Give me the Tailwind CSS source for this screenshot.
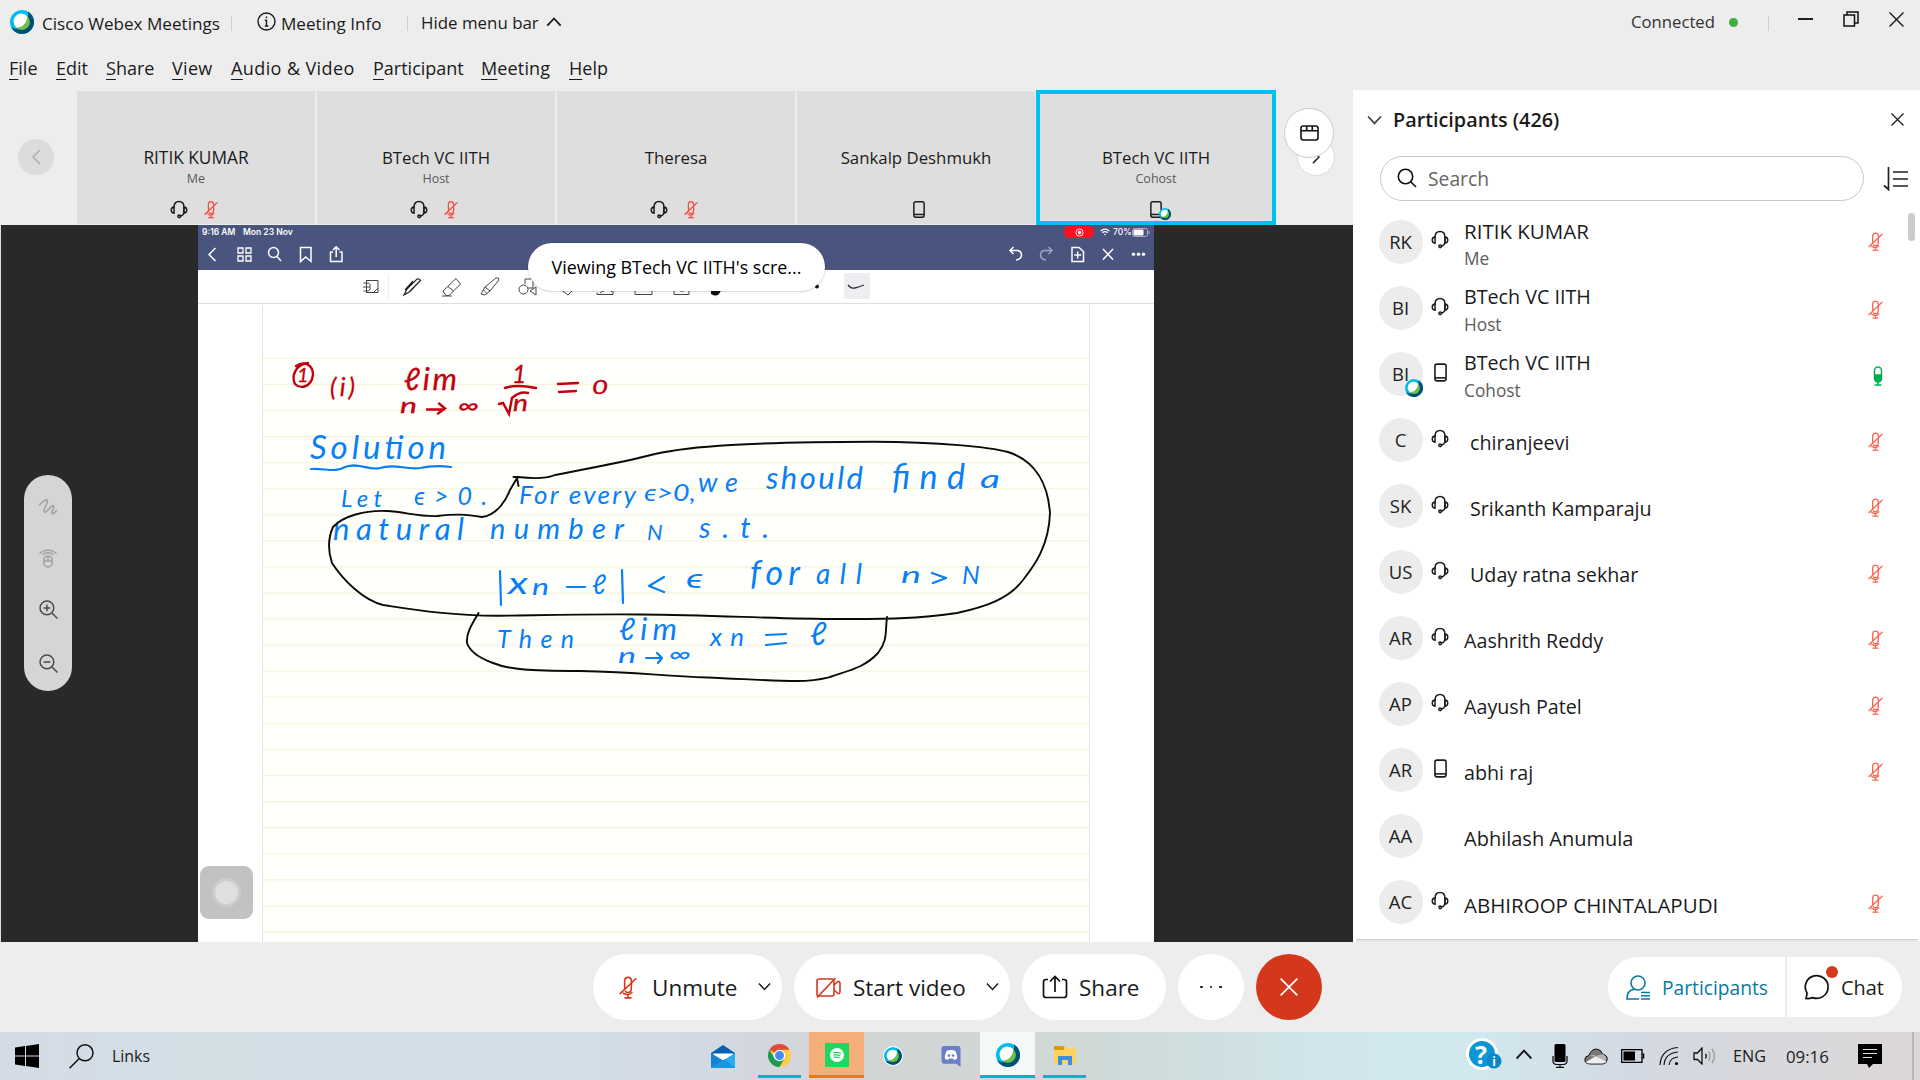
<!DOCTYPE html>
<html lang="en">
<head>
<meta charset="utf-8">
<title>Cisco Webex Meetings</title>
<script src="https://cdn.jsdelivr.net/npm/@tailwindcss/browser@4"></script>
</head>
<body class="w-[1920px] h-[1080px] overflow-hidden bg-[#ededed] text-[#1b1b1b] font-['Open_Sans',sans-serif] flex flex-col">

<svg class="hidden">
  <symbol id="webex" viewBox="0 0 24 24">
    <circle cx="12" cy="12" r="12" fill="#00bceb"/>
    <path d="M18 1.6A12 12 0 1 1 1.2 17.2Q5 20 12 19Q19 15 18 1.6Z" fill="#005073"/>
    <circle cx="12" cy="12" r="7.9" fill="#6cc04a"/>
    <path d="M17.3 6.2A7.9 7.9 0 1 0 6.3 17.5C12 18 17 13 17.3 6.2Z" fill="#fff"/>
  </symbol>
  <symbol id="headset" viewBox="0 0 20 20" fill="none" stroke="currentColor" stroke-width="1.6" stroke-linecap="round">
    <path d="M4.5 7.5C4.5 3.5 6.8 1.2 10 1.2S15.500 3.500 15.500 7.500V13.500Q15 16.500 11.500 17.500"/>
    <path d="M4.500 7.200C.3 7.500.3 13.800 4.500 14.200ZM15.500 7.200C19.700 7.500 19.700 13.800 15.500 14.200Z"/>
    <circle cx="10.200" cy="17.600" r="1.500"/>
  </symbol>
  <symbol id="micoff" viewBox="0 0 16 20" fill="none" stroke="currentColor" stroke-width="1.400" stroke-linecap="round">
    <path d="M5 11V4Q5.200 1 8 1T11 4V10.500Q11 14.500 8 14.500Q6.500 14.500 5.800 13.500"/>
    <path d="M1 15.500L15 2.200M3.800 15Q8 18 11.500 14.500M8 16.500V19M5.300 19.200H10.700"/>
  </symbol>
  <symbol id="phone" viewBox="0 0 14 20" fill="none" stroke="currentColor" stroke-width="1.700">
    <rect x="1" y="1" width="12" height="18" rx="2.200"/><path d="M1 15.800H13"/>
  </symbol>
  <symbol id="x" viewBox="0 0 14 14" fill="none" stroke="currentColor" stroke-width="1.300"><path d="M.5.5L13.500 13.500M13.500.5L.5 13.500"/></symbol>
  <symbol id="down" viewBox="0 0 14 9" fill="none" stroke="currentColor" stroke-width="1.600"><path d="M1 1.200L7 7.700L13 1.200"/></symbol>
</svg>

<!-- title bar -->
<header class="h-[46px] shrink-0 flex items-center text-[17.1px] leading-none">
  <svg class="size-6 ml-[10px] -mt-[2px]"><use href="#webex"/></svg>
  <span class="ml-2 w-[189px] whitespace-nowrap pt-px">Cisco Webex Meetings</span>
  <span class="w-px h-[15px] bg-[#cfcfcf]"></span>
  <svg class="size-[19px] ml-[25px] -mt-[3px]" viewBox="0 0 19 19" fill="none" stroke="currentColor" stroke-width="1.400"><circle cx="9.500" cy="9.500" r="8.500"/><path d="M9.500 8V14M7.800 8.300H9.500M7.800 14H11.300M9.500 4.500V6.200"/></svg>
  <span class="ml-[5px] w-[126px] whitespace-nowrap pt-px">Meeting Info</span>
  <span class="w-px h-[15px] bg-[#cfcfcf]"></span>
  <span class="ml-[13px] whitespace-nowrap text-[16.9px] pt-px">Hide menu bar</span>
  <svg class="w-4 h-[10px] ml-[7px] -mt-[2px] rotate-180"><use href="#down"/></svg>
  <span class="ml-auto w-[85px] text-[16.700px] text-[#333] whitespace-nowrap -mt-[2px]">Connected</span>
  <span class="size-[9px] rounded-full bg-[#3fae3f] ml-[13px] -mt-px"></span>
  <span class="w-px h-[15px] bg-[#cfcfcf] ml-[30px]"></span>
  <span class="w-[15px] h-[2px] bg-[#222] ml-[29px] -mt-2"></span>
  <svg class="size-[16px] ml-[30px] -mt-2" viewBox="0 0 16 16" fill="none" stroke="#111" stroke-width="1.500"><rect x="1" y="4" width="10.500" height="11"/><path d="M4 4V1H15V12H11.500"/></svg>
  <svg class="size-[15px] ml-[30px] mr-[16px] -mt-2"><use href="#x"/></svg>
</header>

<!-- menu bar -->
<nav class="h-[44px] shrink-0 pl-[9px] pt-[9px] flex text-[18px] leading-[26px] whitespace-nowrap">
  <span class="w-[47px]"><u class="underline-offset-4 decoration-1">F</u>ile</span>
  <span class="w-[50px]"><u class="underline-offset-4 decoration-1">E</u>dit</span>
  <span class="w-[66px]"><u class="underline-offset-4 decoration-1">S</u>hare</span>
  <span class="w-[59px] tracking-[0.3px]"><u class="underline-offset-4 decoration-1">V</u>iew</span>
  <span class="w-[142px] tracking-[0.4px]"><u class="underline-offset-4 decoration-1">A</u>udio &amp; Video</span>
  <span class="w-[108px]"><u class="underline-offset-4 decoration-1">P</u>articipant</span>
  <span class="w-[88px] tracking-[0.15px]"><u class="underline-offset-4 decoration-1">M</u>eeting</span>
  <span><u class="underline-offset-4 decoration-1">H</u>elp</span>
</nav>

<main class="h-[852px] shrink-0 flex">
  <section class="w-[1353px] flex flex-col">
    <!-- video strip -->
    <div class="h-[135px] flex shrink-0 relative">
      <div class="w-[77px] pl-[18px] pt-[49px]"><span class="size-9 rounded-full bg-[#dcdcdc] flex items-center justify-center"><svg class="w-[9px] h-4" viewBox="0 0 9 16" fill="none" stroke="#aaa" stroke-width="1.400"><path d="M8 1L1 8L8 15"/></svg></span></div>
      <div id="tiles" class="flex pt-px gap-[2px] h-[134px]"></div>
      <span class="absolute left-[1297px] top-[48px] size-[38px] rounded-full bg-white border border-[#ddd] flex items-center justify-center"><svg class="w-2 h-[14px]" viewBox="0 0 9 16" fill="none" stroke="#222" stroke-width="1.700"><path d="M1 1L8 8L1 15"/></svg></span>
      <span class="absolute left-[1284px] top-[18px] size-[50px] rounded-full bg-white border border-[#ccc] flex items-center justify-center"><svg class="w-[19px] h-4" viewBox="0 0 19 16" fill="none" stroke="#111" stroke-width="1.600"><rect x="1" y="1" width="17" height="14" rx="2.200"/><path d="M1 5.800H18M6.700 1V5.500M12.300 1V5.500"/></svg></span>
    </div>

    <!-- shared screen -->
    <div class="h-[717px] bg-[#292929] border-l border-[#dcdcdc] relative flex">
      <div class="w-[197px] shrink-0 pt-[250px] pl-[23px]">
        <div class="w-12 h-[216px] rounded-full bg-[#d5d5d5] relative flex flex-col items-center pt-[22px] text-[#4a4a4a]">
          <svg class="w-5 h-5" viewBox="0 0 20 20" fill="none" stroke="#a3a3a3" stroke-width="1.600" stroke-linecap="round"><path d="M1.500 8Q8 1 9.500 3.500C10.500 6 4 13 6.500 15C9 16.500 13 7 15.500 9C17 11 12.500 15 14 16.500Q15.500 17.500 18.500 13.500"/></svg>
          <svg class="w-5 h-5 mt-[31px]" viewBox="0 0 20 20" fill="none" stroke="#a3a3a3" stroke-width="1.500"><path d="M1.500 5.500Q10 -1.500 18.500 5.500M4.500 7Q10 2.500 15.500 7"/><rect x="5.800" y="8" width="8.400" height="11" rx="4"/><path d="M5.800 13H14.200M10 8V13"/></svg>
          <svg class="w-[19px] h-[19px] mt-[32px]" viewBox="0 0 18 18" fill="none" stroke="currentColor" stroke-width="1.400"><circle cx="7.500" cy="7.500" r="6.500"/><path d="M12.300 12.300L17.500 17.500M4.300 7.500H10.700M7.500 4.300V10.700"/></svg>
          <svg class="w-[19px] h-[19px] mt-[35px]" viewBox="0 0 18 18" fill="none" stroke="currentColor" stroke-width="1.400"><circle cx="7.500" cy="7.500" r="6.500"/><path d="M12.300 12.300L17.500 17.500M4.300 7.500H10.700"/></svg>
        </div>
      </div>

      <div class="w-[956px] bg-white flex flex-col relative">
        <!-- tablet status and navigation -->
        <div class="h-[45px] bg-[#49557f] text-white shrink-0">
          <div class="h-[13px] flex items-center leading-none font-semibold font-['Inter',sans-serif] pl-1 pt-px">
            <span class="w-[41px] whitespace-nowrap text-[8.500px]">9:16 AM</span><span class="whitespace-nowrap text-[8.500px]">Mon 23 Nov</span>
            <span class="ml-auto w-[30px] h-3 rounded-[5px] bg-[#fb1220] flex items-center justify-center"><svg class="size-[9px]" viewBox="0 0 10 10" fill="none" stroke="#fff"><circle cx="5" cy="5" r="4"/><circle cx="5" cy="5" r="1.500" fill="#fff"/></svg></span>
            <svg class="w-[10px] h-2 ml-[6px]" viewBox="0 0 12 9" fill="none" stroke="#fff" stroke-width="1.500"><path d="M.8 3.500Q6 -1.500 11.200 3.500M2.800 5.500Q6 2.500 9.200 5.500"/><circle cx="6" cy="7.500" r="1" fill="#fff" stroke="none"/></svg>
            <span class="ml-[3px] w-[18px] text-[8.500px] font-medium">70%</span>
            <svg class="w-[18px] h-[9px] ml-px mr-1" viewBox="0 0 18 9"><rect x=".5" y=".5" width="15" height="8" rx="2" fill="none" stroke="#a7adc4"/><rect x="1.500" y="1.500" width="10" height="6" rx="1" fill="#fff"/><path d="M17 3V6" stroke="#a7adc4"/></svg>
          </div>
          <svg class="block w-[956px] h-8" viewBox="198 238 956 32" fill="none" stroke="#fff" stroke-width="1.500">
            <path d="M215.500 248L209 254.500L215.500 261"/>
            <path d="M238 248h5v5h-5zM246 248h5v5h-5zM238 256h5v5h-5zM246 256h5v5h-5z" stroke-width="1.300"/>
            <circle cx="273.500" cy="252.500" r="5"/><path d="M277 256.500L281 261"/>
            <path d="M300.500 247.500H311V261.500L305.700 257L300.500 261.500Z"/>
            <path d="M333 252H330.500V261.500H342V252H339.500M336.200 257V247M333 250L336.200 246.800L339.500 250"/>
            <path d="M1013.500 247L1010 250.500L1013.500 254M1010.500 250.500H1017.500Q1021.500 251 1021.500 255T1016 260"/>
            <path d="M1048.500 247L1052 250.500L1048.500 254M1051.500 250.500H1044.500Q1040.500 251 1040.500 255T1046 260" stroke="#a0a6bf"/>
            <path d="M1072 247.500H1079L1083.500 251.500V261.500H1072ZM1077.700 251.500V258.500M1074.300 255H1081.200"/>
            <path d="M1103 249L1113 259.500M1113 249L1103 259.500"/>
            <g fill="#fff" stroke="none"><circle cx="1133.500" cy="254.300" r="1.700"/><circle cx="1138.500" cy="254.300" r="1.700"/><circle cx="1143.500" cy="254.300" r="1.700"/></g>
          </svg>
        </div>
        <!-- drawing tools -->
        <div class="h-[34px] border-b border-[#dedede] shrink-0">
          <svg class="block w-[956px] h-[33px]" viewBox="198 270 956 33" fill="none" stroke="#444" stroke-width="1">
            <path d="M366 280.500H378V292.500H366M363.500 283H367Q371 283 370 287Q371 291 367 291H363.500M366.500 280.500V292.500M363 287H370M374 292L378 288"/>
            <path d="M388.500 274V298M716 274V298" stroke="#eee"/>
            <path d="M404 295L407 289L417 279Q419.500 278.500 420.500 280.500L410 291.500L404 295ZM413 281L405 290M410 291L420 281" stroke="#222" stroke-width="1.200"/>
            <path d="M443 291L456 278.500L460.500 284L449 295.500H446ZM448 286.500L453.500 291M442 296H452"/>
            <path d="M485 287L496 278Q499 277 499 280L490 291ZM485 287L481 294L485 295L490 291M483.500 290L487 293.500"/>
            <circle cx="523.500" cy="289.500" r="4.500"/><path d="M525 284V279H533V288H528M530 291L536 287V295Z"/>
            <path d="M560 289L568 295L573 290M562 287L568 291M597 292.500V294.500H613V291M600 293L608 288L612 292M635 291V294.500H652V291M640 290H646M674 291V294.500H689V291M680 291H684"/>
            <path d="M711 291L717 290L723 287L719 294Q716 297 711 294Z" fill="#111" stroke="none"/>
            <circle cx="817" cy="286.500" r="2" fill="#111" stroke="none"/>
            <rect x="844" y="273" width="26" height="26" rx="2" fill="#efedf1" stroke="none"/>
            <path d="M848 285Q851 289 855 288T864 285" stroke="#333" stroke-width="1.300"/>
          </svg>
        </div>
        <!-- notebook page -->
        <svg class="block w-[956px] h-[638px]" viewBox="198 304 956 638">
          <defs><pattern id="rule" x="198" y="357.800" width="900" height="26.070" patternUnits="userSpaceOnUse"><rect width="900" height="1.200" fill="#f7f3dd"/></pattern></defs>
          <rect x="262" y="358" width="827" height="584" fill="#fffffb"/>
          <rect x="263" y="357" width="826" height="585" fill="url(#rule)"/>
          <path d="M262.500 306V942M1089.500 304V942" stroke="#e6e4e0"/>
          <g fill="none" stroke="#c4000d" stroke-width="2.400" stroke-linecap="round">
            <path d="M296 366C304 361 313 364 313 375C311 388 300 389 295 384C291 376 296 364 308 363"/>
            <path d="M427 409.500H444M439 403.500L445 408.500L438 413.500M505 388Q516 384 536 388M499 404L503 403L509 414L512 398Q520 391 528 393M558 384L578 383M559 392L576 391"/>
          </g>
          <g class="font-['Lato',sans-serif] italic" fill="#c4000d" stroke="#c4000d" stroke-width=".3">
            <text x="297" y="382" font-size="20">1</text>
            <text x="330" y="396" font-size="25" textLength="25">(i)</text>
            <text x="404" y="390" font-size="31" textLength="53" lengthAdjust="spacing">ℓim</text>
            <text x="400" y="413" font-size="22" textLength="17" lengthAdjust="spacingAndGlyphs">n</text>
            <text x="458" y="413" font-size="21" textLength="21" lengthAdjust="spacingAndGlyphs">∞</text>
            <text x="512" y="383" font-size="25">1</text>
            <text x="513" y="411" font-size="23" textLength="15" lengthAdjust="spacingAndGlyphs">n</text>
            <text x="592" y="394" font-size="19" textLength="16" lengthAdjust="spacingAndGlyphs">0</text>
          </g>
          <g fill="none" stroke="#087ef7" stroke-width="2.200" stroke-linecap="round" stroke-linejoin="round">
            <path d="M311 469C325 468 335 473 345 467C360 462 368 471 380 468C395 463 405 470 420 468Q435 465 451 467"/>
            <path d="M500 571L501 605M622 570L623 603M567 587H585M664 577L649 586L664 592M932 573L946 578L933 583M646 658H662M657 653L662 658L658 663M766 635L786 634M766 645L786 643"/>
          </g>
          <g class="font-['Lato',sans-serif] italic" fill="#087ef7">
            <text x="310" y="459" font-size="33" textLength="136" lengthAdjust="spacing">Solution</text>
            <text x="341" y="507" font-size="24" textLength="41" lengthAdjust="spacing">Let</text>
            <text x="414" y="505" font-size="25" textLength="73" lengthAdjust="spacing">ϵ&gt;0.</text>
            <text x="519" y="504" font-size="26" textLength="117" lengthAdjust="spacing">For every</text>
            <text x="644" y="501" font-size="23" textLength="52" lengthAdjust="spacingAndGlyphs">ϵ&gt;0,</text>
            <text x="698" y="492" font-size="27" textLength="40" lengthAdjust="spacing">we</text>
            <text x="766" y="489" font-size="31" textLength="97" lengthAdjust="spacing">should</text>
            <text x="892" y="489" font-size="34" textLength="73" lengthAdjust="spacing">find</text>
            <text x="980" y="488" font-size="26" textLength="20" lengthAdjust="spacingAndGlyphs">a</text>
            <text x="333" y="540" font-size="31" textLength="131" lengthAdjust="spacing">natural</text>
            <text x="490" y="539" font-size="29" textLength="134" lengthAdjust="spacing">number</text>
            <text x="647" y="540" font-size="22">N</text>
            <text x="699" y="538" font-size="29" textLength="70" lengthAdjust="spacing">s.t.</text>
            <text x="508" y="594" font-size="31" textLength="20" lengthAdjust="spacingAndGlyphs">x</text>
            <text x="532" y="595" font-size="23" textLength="17" lengthAdjust="spacingAndGlyphs">n</text>
            <text x="592" y="594" font-size="27">ℓ</text>
            <text x="686" y="588" font-size="27" textLength="17" lengthAdjust="spacingAndGlyphs">ϵ</text>
            <text x="750" y="585" font-size="34" textLength="50" lengthAdjust="spacing">for</text>
            <text x="816" y="584" font-size="28" textLength="46" lengthAdjust="spacing">all</text>
            <text x="901" y="583" font-size="24" textLength="20" lengthAdjust="spacingAndGlyphs">n</text>
            <text x="962" y="584" font-size="25">N</text>
            <text x="497" y="648" font-size="25" textLength="77" lengthAdjust="spacing">Then</text>
            <text x="619" y="640" font-size="31" textLength="58" lengthAdjust="spacing">ℓim</text>
            <text x="618" y="663" font-size="22" textLength="18" lengthAdjust="spacingAndGlyphs">n</text>
            <text x="669" y="662" font-size="22" textLength="22" lengthAdjust="spacingAndGlyphs">∞</text>
            <text x="710" y="646" font-size="26" textLength="34" lengthAdjust="spacing">xn</text>
            <text x="810" y="645" font-size="32">ℓ</text>
          </g>
          <g fill="none" stroke="#0a0a0a" stroke-width="1.900" stroke-linecap="round" stroke-linejoin="round">
            <path d="M513.500 477L518 477C535 479 548 478 555 475C585 469 625 462 655 454C690 446 750 442 873 441.700C940 442 990 447 1008 452C1036 461 1048 485 1050 513C1049 545 1035 565 1023 580C1009 599 985 607 957 613C920 619 880 619 840 619C770 619 720 615 640 614.500C580 614 530 615.500 500 615.700C450 616 410 609 383 605C363 600 343 580 332 563C327 548 329 536 333 527C343 516 365 510 387 511C405 512 420 517 437 516C455 514 465 514 482 517C498 515 507 498 510 490L517 478L518.500 486"/>
            <path d="M478.500 613C472 624 466 633 467 643C470 652 482 659 493 663C510 670 530 670.500 580 671C640 672 660 676 707 677.500C745 679 770 681 797 681C815 681 822 679 830 677C850 670 864 668 878 653C888 640 885 632 887 617"/>
          </g>
        </svg>
        <!-- assistive button -->
        <span class="absolute left-[1.500px] top-[641px] size-[53px] rounded-[9px] bg-[#c2c2c2] flex items-center justify-center"><span class="size-[23px] rounded-full bg-[#dfdfdf] ring-3 ring-[#cccccc]"></span></span>
      </div>

      <div class="absolute left-[527px] top-[18px] w-[297px] h-12 rounded-full bg-white shadow-sm ring-1 ring-black/5 flex items-center justify-center text-[17.900px] text-black whitespace-nowrap">Viewing BTech VC IITH's scre...</div>
    </div>
  </section>

  <!-- participants panel -->
  <aside class="w-[567px] h-[852px] bg-white relative flex flex-col overflow-hidden">
    <div class="h-[66px] flex items-center shrink-0 pl-[14px] pr-4 pt-[2px] -mt-[4px]">
      <svg class="w-[15px] h-[10px] text-[#444]"><use href="#down"/></svg>
      <span class="ml-[11px] font-semibold text-[19.800px] leading-none whitespace-nowrap">Participants (426)</span>
      <svg class="size-[13px] ml-auto -mt-[2px]"><use href="#x"/></svg>
    </div>
    <div class="flex items-center shrink-0 mt-[4px] pl-[27px]">
      <div class="w-[484px] h-[45px] rounded-full border border-[#c9c9c9] flex items-center pl-[16px] text-[19.300px] text-[#666]">
        <svg class="size-5 mr-[11px] -mt-[2px]" viewBox="0 0 20 20" fill="none" stroke="#111" stroke-width="1.600"><circle cx="8.500" cy="8.500" r="7.200"/><path d="M13.700 13.700L19 19"/></svg><span class="pt-[2px]">Search</span>
      </div>
      <svg class="w-[25px] h-6 ml-[19px]" viewBox="0 0 25 24" fill="none" stroke="#222" stroke-width="1.700"><path d="M5.500 0V22.500L1 18.500M10 5H25M10 12H25M10 19H25"/></svg>
    </div>
    <div id="people" class="pt-[8px]"></div>
    <span class="absolute right-[5px] top-[123px] w-[7px] h-7 rounded-sm bg-[#cbcbcb]"></span>
    <span class="absolute left-[3px] right-[2px] bottom-0 h-[3px] bg-[#e6e6e6] border-t border-[#cfcfcf]"></span>
  </aside>
</main>

<!-- call controls -->
<div class="h-[90px] shrink-0 flex items-center pl-[593px] pr-[18px] text-[22.500px] leading-none whitespace-nowrap">
  <div class="w-[189px] h-[66px] rounded-full bg-white flex items-center pl-[26px]">
    <svg class="w-[18px] h-[23px] text-[#d4371c]"><use href="#micoff"/></svg><span class="ml-[15px] w-[86px] pt-[2px]">Unmute</span><svg class="w-[13px] h-[9px] ml-[20px] -mt-[2px]"><use href="#down"/></svg>
  </div>
  <div class="w-[216px] h-[66px] ml-3 rounded-full bg-white flex items-center pl-[22px]">
    <svg class="w-[25px] h-[21px]" viewBox="0 0 25 21" fill="none" stroke="#d4371c" stroke-width="1.600"><rect x="1" y="2" width="17" height="17" rx="2"/><path d="M18 8L22 4.500Q24 4 24 6.500V14.500Q24 17 22 16.500L18 13M1 20.500L19.500 1"/></svg>
    <span class="ml-3 w-[113px] pt-[2px]">Start video</span><svg class="w-[13px] h-[9px] ml-[20px] -mt-[2px]"><use href="#down"/></svg>
  </div>
  <div class="w-[144px] h-[66px] ml-3 rounded-full bg-white flex items-center pl-[20px]">
    <svg class="w-[26px] h-[24px]" viewBox="0 0 26 24" fill="none" stroke="#111" stroke-width="1.700"><path d="M6 4.500H4Q1.500 4.500 1.500 7V20Q1.500 22.500 4 22.500H22Q24.500 22.500 24.500 20V7Q24.500 4.500 22 4.500H20M13 17V2M8 6.500L13 1.500L18 6.500"/></svg>
    <span class="ml-[11px] pt-[2px]">Share</span>
  </div>
  <div class="size-[66px] ml-3 rounded-full bg-white flex items-center justify-center gap-[7px]"><i class="size-[2.500px] rounded-full bg-[#111]"></i><i class="size-[2.500px] rounded-full bg-[#111]"></i><i class="size-[2.500px] rounded-full bg-[#111]"></i></div>
  <div class="size-[66px] ml-3 rounded-full bg-[#d4371c] text-white flex items-center justify-center"><svg class="size-[18px]"><use href="#x"/></svg></div>

  <div class="ml-auto h-[60px] w-[294px] rounded-full bg-white flex items-center text-[19.200px]">
    <div class="w-[177px] flex items-center pl-[18px] text-[#0a7aa0]">
      <svg class="w-[24px] h-[25px]" viewBox="0 0 24 25" fill="none" stroke="currentColor" stroke-width="1.600"><circle cx="12" cy="8" r="7"/><path d="M8 14.500Q1 15 1 24H13M15 17.500H24M15 20.700H24M15 24H24"/></svg>
      <span class="ml-3 pt-[2px]">Participants</span>
    </div>
    <div class="w-[2px] h-[60px] bg-[#ededed]"></div>
    <div class="flex items-center pl-[17px] relative">
      <svg class="w-[26px] h-[26px]" viewBox="0 0 26 26" fill="none" stroke="#111" stroke-width="1.700"><path d="M2 24.500Q3 21 3 19A11.400 11.400 0 1 1 8.500 23.600Q5 25 2 24.500Z"/></svg>
      <i class="absolute left-[39px] -top-[8px] size-3 rounded-full bg-[#d4371c]"></i>
      <span class="ml-[11px] pt-[2px] text-[19.900px]">Chat</span>
    </div>
  </div>
</div>

<!-- taskbar -->
<footer class="h-12 shrink-0 relative flex items-center bg-[linear-gradient(90deg,#d5dbe6_0%,#d2dfe5_10%,#d3dee6_30%,#d3d8e1_38%,#d2d5d4_46%,#cfd9d6_56%,#cfdedf_62%,#d0e6ec_69%,#d1e9ef_76%,#d3d9e3_85%,#d8d8dc_92%,#dcd7d8_100%)]">
  <svg class="size-6 ml-[15px]" viewBox="0 0 24 24"><path d="M0 3.400L10 2V11.500H0ZM11 1.900L24 0V11.500H11ZM0 12.500H10V22L0 20.600ZM11 12.500H24V24L11 22.100Z"/></svg>
  <svg class="size-[25px] ml-[30px]" viewBox="0 0 25 25" fill="none" stroke="#111" stroke-width="1.500"><circle cx="16" cy="8.800" r="8"/><path d="M10.300 14.500L.5 24.300"/></svg>
  <span class="ml-[18px] w-[584px] shrink-0 pt-px text-[15.900px]">Links</span>
  <div class="flex h-12">
    <div class="w-[57px] flex items-center justify-center pr-[3px]"><svg class="w-6 h-[23px]" viewBox="0 0 24 23"><path d="M0 8L12 0L24 8V12H0Z" fill="#0b5fb0"/><path d="M2 8.500H22V14L12 19L3 12Z" fill="#fff"/><path d="M0 8L13 16L0 23Z" fill="#1583d4"/><path d="M24 8V23H0Z" fill="#29aef0"/><path d="M24 23H0L14 14Z" fill="#1c94e0"/></svg></div>
    <div class="w-[43px] ml-[5px] h-[46px] border-b-[3px] border-[#00b7c8] flex items-center justify-center"><svg class="size-[23px] mt-[3px]" viewBox="0 0 24 24"><circle cx="12" cy="12" r="12" fill="#fc4"/><path d="M12 12L1.600 6A12 12 0 0 1 22.400 6H12Z" fill="#dd4b3e"/><path d="M1.600 6A12 12 0 0 0 12 24L17.200 15L6.800 15Z" fill="#1a9c57"/><circle cx="12" cy="12" r="6" fill="#fff"/><circle cx="12" cy="12" r="4.700" fill="#4a8af4"/></svg></div>
    <div class="w-[55px] ml-2 h-[46px] bg-[#f7af7a] border-b-[3px] border-[#ff7400] flex items-center justify-center"><span class="size-6 mt-[3px] bg-[#1ed760] flex items-center justify-center"><svg class="size-[14px]" viewBox="0 0 14 14"><circle cx="7" cy="7" r="7" fill="#fff"/><path d="M3 4.800Q7 3.600 11 5.500M3.300 7.200Q7 6.200 10.300 7.900M3.700 9.400Q7 8.600 9.600 10" fill="none" stroke="#1ed760" stroke-width="1.200"/></svg></span></div>
    <div class="w-[57px] flex items-center justify-center"><svg class="size-[18px] rounded-full ring-1 ring-white"><use href="#webex"/></svg></div>
    <div class="w-[59px] flex items-center justify-center"><svg class="w-5 h-[21px]" viewBox="0 0 20 22"><path d="M2.500 0H17.500Q20 0 20 2.500V22L15.500 18.500H2.500Q0 18.500 0 16V2.500Q0 0 2.500 0Z" fill="#6b7fc7"/><path d="M5.500 5Q10 3.500 14.500 5Q16.500 9 16.500 13Q14 15 13 14.300L12 13H8L7 14.300Q5 15 3.500 13Q3.500 9 5.500 5Z" fill="#fff"/><circle cx="7.800" cy="10" r="1.400" fill="#6b7fc7"/><circle cx="12.200" cy="10" r="1.400" fill="#6b7fc7"/></svg></div>
    <div class="w-[55px] h-[46px] bg-[#f5f8f8] border-b-[3px] border-[#00b7c8] flex items-center justify-center"><svg class="size-6 mt-[3px]"><use href="#webex"/></svg></div>
    <div class="w-[43px] ml-2 h-[46px] border-b-[3px] border-[#00b7c8] flex items-center justify-center"><svg class="w-[22px] h-[19px] mt-[3px]" viewBox="0 0 22 19"><path d="M0 0H9L11 2H21V6H0Z" fill="#d99a08"/><path d="M0 4H9L11 2H22V18H0Z" fill="#fdd25e"/><path d="M4 19V10H18V19H14V14H8V19Z" fill="#3a8fdd"/></svg></div>
  </div>
  <div class="ml-auto flex items-center">
    <svg class="size-9" viewBox="0 0 36 36"><circle cx="16" cy="16" r="16" fill="#fff"/><circle cx="16" cy="16" r="13" fill="#0a97d9"/><circle cx="28" cy="23" r="7.500" fill="#0a87cc"/></svg>
    <span class="-ml-[27px] -mt-[4px] w-3 text-center text-[25px] leading-none font-bold text-white">?</span><span class="ml-[3px] mt-[11px] w-2 text-center text-[12px] leading-none font-bold text-white">i</span>
    <svg class="w-[18px] h-[11px] ml-[17px] mr-px rotate-180 -mt-1"><use href="#down"/></svg>
    <svg class="w-4 h-6 ml-[18px]" viewBox="0 0 16 24"><rect x="2.500" y="0" width="11" height="18" rx="1.500"/><path d="M1 12V17Q1 20.500 5 20.500H11Q15 20.500 15 17V12M8 20.500V23M4 23.300H12" fill="none" stroke="#000" stroke-width="1.200"/></svg>
    <svg class="w-6 h-[17px] ml-4" viewBox="0 0 24 17"><path d="M6 16Q.7 15.500.8 11.500Q1 8 5 7.500Q7 1 12.500 1Q17.500 1.500 18.500 6Q23 7 23.300 11Q23 15.500 19 16Z" fill="#777" stroke="#111"/><path d="M2 14L12 8L22.500 13.500Q21 15.500 18 15.500H6Q3 15.500 2 14Z" fill="#eee"/><path d="M5 8Q10 6 12 8L19 6Q22 8 22.500 12L21 13L12 8.500Z" fill="#b5b5b5"/></svg>
    <svg class="w-[24px] h-[14px] ml-[13px]" viewBox="0 0 24 14"><path d="M.7.7H21V13.300H.7Z" fill="none" stroke="#000" stroke-width="1.300"/><path d="M2.500 2.500H14V11.500H2.500ZM21.500 4.500H23.300V9.500H21.500Z"/></svg>
    <svg class="w-[20px] h-[20px] ml-[14px]" viewBox="0 0 20 20" fill="none" stroke="#111" stroke-width="1.200"><path d="M1 19Q2 3 19 1.500M5 19Q6 7 19 6M10 19Q11 11.500 19 11"/><circle cx="17.500" cy="17.500" r="1.600" fill="#000" stroke="none"/></svg>
    <svg class="w-6 h-[18px] ml-[14px]" viewBox="0 0 24 18" fill="none" stroke="#111" stroke-width="1.300"><path d="M1 6V12.500H4.500L9 17V1L4.500 6Z"/><path d="M12.500 7Q14 9 12.500 11.500"/><path d="M15.500 4.500Q18.500 9 15.500 14M19 2Q24 9 19 16" stroke="#999"/></svg>
    <span class="ml-4 w-[53px] text-[16.200px] pt-px">ENG</span>
    <span class="w-[72px] text-[16.800px] pt-px">09:16</span>
    <svg class="w-6 h-6" viewBox="0 0 24 24"><path d="M0 0H24V20H15L11 24L9 20H0Z"/><path d="M5 5.500H19M5 9.500H19M5 13.500H14" stroke="#ddd" stroke-width="1.200"/></svg>
    <span class="w-[2px] h-12 bg-[#b9b6b8] ml-[30px] mr-[6px]"></span>
  </div>
</footer>

<script>
const icon = (id, cls) => `<svg class="${cls}"><use href="#${id}"/></svg>`;
const tiles = [
  ["RITIK KUMAR", "Me", "headset"], ["BTech VC IITH", "Host", "headset"],
  ["Theresa", "", "headset"], ["Sankalp Deshmukh", "", "phone"], ["BTech VC IITH", "Cohost", "webex"]
];
document.getElementById("tiles").innerHTML = tiles.map(([name, role, dev]) => `
  <div class="${dev === "webex" ? "w-[240px] -ml-px -mt-px h-[135px] border-4 border-[#00bff3] pt-[52px]" : "w-[238px] h-[133px] pt-[55px]"} bg-[#dedede] text-center whitespace-nowrap">
    <div class="${name.startsWith("RITIK") ? "text-[17.300px]" : "text-[16.800px]"} leading-6">${name}</div>
    <div class="h-4 text-[12.500px] leading-4 mt-px text-[#5a5a5a]">${role}</div>
    <div class="flex justify-center items-center gap-4 mt-[12px] h-5">
      ${dev === "headset" ? icon("headset", "w-[18px] h-[19px] -ml-[5px]") + icon("micoff", "w-[14px] h-[19px] text-[#f6493f]")
        : dev === "phone" ? icon("phone", "w-3 h-[19px] ml-[5px]")
        : `<span class="relative w-3 h-[19px]">${icon("phone", "w-3 h-[19px]")}${icon("webex", "absolute left-[9px] top-[8px] size-[12px]")}</span>`}
    </div>
  </div>`).join("");

const people = [
  ["RK", "headset", "RITIK KUMAR", "Me", "off"], ["BI", "headset", "BTech VC IITH", "Host", "off"],
  ["BI", "phone", "BTech VC IITH", "Cohost", "on"], ["C", "headset", "chiranjeevi", "", "off", 1],
  ["SK", "headset", "Srikanth Kamparaju", "", "off", 1], ["US", "headset", "Uday ratna sekhar", "", "off", 1],
  ["AR", "headset", "Aashrith Reddy", "", "off"], ["AP", "headset", "Aayush Patel", "", "off"],
  ["AR", "phone", "abhi raj", "", "off"], ["AA", "", "Abhilash Anumula", "", ""],
  ["AC", "headset", "ABHIROOP CHINTALAPUDI", "", "off"]
];
const micOn = `<svg class="w-[10px] h-5" viewBox="0 0 10 20" fill="none" stroke="#00ae4f" stroke-width="1.500"><rect x="1.500" y="1" width="7" height="15" rx="3.500"/><path d="M2 9H8V13Q7 15.500 5 15.500T2 13Z" fill="#00ae4f"/><path d="M5 16V19M1.500 19H8.500"/></svg>`;
document.getElementById("people").innerHTML = people.map(([ini, dev, name, role, mic, indent], i) => `
  <div class="h-[66px] flex items-center pl-[25.500px] pr-[37px] whitespace-nowrap">
    <span class="relative size-11 rounded-full bg-[#ececec] flex items-center justify-center text-[18.500px] text-[#222]">${ini}${i === 2 ? icon("webex", "absolute left-[26px] top-[27px] size-[18px]") : ""}</span>
    <span class="w-[18px] ml-[8.500px] ${i ? "-mt-[3px]" : "-mt-[6px]"} flex justify-center">${dev === "headset" ? icon("headset", "w-[18px] h-[19px]") : dev ? icon("phone", "w-[13px] h-[19px]") : ""}</span>
    <span class="${indent ? "ml-[21px]" : "ml-[15px]"} ${role ? "pt-[5px]" : "pt-[6px]"}">
      <span class="block ${name.includes("ABHIROOP") ? "text-[20.500px]" : name.startsWith("RITIK") ? "text-[20.500px]" : name.startsWith("Abhi") ? "text-[20px]" : "text-[19.700px]"} leading-7">${name}</span>
      ${role ? `<span class="block text-[17.300px] leading-[28px] text-[#5c5c5c]">${role}</span>` : ""}
    </span>
    <span class="ml-auto ${i ? "mt-[3px]" : "-mt-px"}">${mic === "off" ? icon("micoff", "w-[15px] h-[19px] text-[#fa6550]") : mic ? micOn : ""}</span>
  </div>`).join("");
</script>
</body>
</html>
